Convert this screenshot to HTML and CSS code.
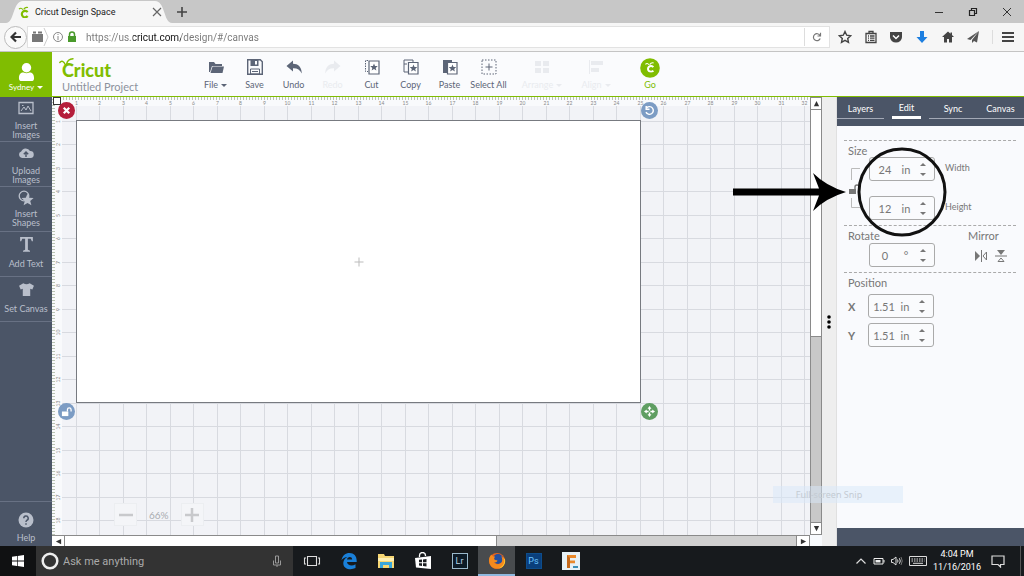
FILE: index.html
```html
<!DOCTYPE html>
<html lang="en">
<head>
<meta charset="utf-8">
<title>Cricut Design Space</title>
<link rel="stylesheet" href="styles.css">
</head>
<body>
<svg class="defs" aria-hidden="true">
  <symbol id="bug" viewBox="0 0 12 12">
    <path d="M9.6 6.2A3.2 3.2 0 1 0 9.6 10" fill="none" stroke="currentColor" stroke-width="2.2"/>
    <path d="M1 3.2Q3 1 4.8 3.6M5.6 3.4Q7.5 .6 10 1.6" fill="none" stroke="currentColor" stroke-width="1.1"/>
  </symbol>
  <symbol id="star" viewBox="0 0 10 10"><path d="M5 .5l1.3 3.2 3.4.2-2.6 2.2.9 3.4L5 7.6 2 9.5l.9-3.4L.3 3.9l3.4-.2z" fill="currentColor"/></symbol>
  <symbol id="lock-open" viewBox="0 0 12 12"><path d="M1 6h7v5H1z" fill="currentColor"/><path d="M7 6V4a2 2 0 0 1 4 0v2" fill="none" stroke="currentColor" stroke-width="1.4"/></symbol>
</svg>

<header class="tabstrip">
  <div class="tab">
    <svg class="tab-bg" viewBox="0 0 176 23" preserveAspectRatio="none"><path d="M0 23C9 23 7 1 18 1H158C169 1 167 23 176 23Z" fill="#f6f6f6"/></svg>
    <svg class="i12 green"><use href="#bug"/></svg>
    <span class="tab-title">Cricut Design Space</span>
    <button class="bare" aria-label="Close tab"><svg class="i10" viewBox="0 0 10 10"><path d="M1 1l8 8M9 1L1 9" stroke="#666" stroke-width="1.2"/></svg></button>
  </div>
  <button class="bare new-tab" aria-label="New tab"><svg class="i10" viewBox="0 0 10 10"><path d="M5 0v10M0 5h10" stroke="#444" stroke-width="1.6"/></svg></button>
  <div class="window-buttons">
    <button class="bare" aria-label="Minimize"><svg class="i10" viewBox="0 0 10 10"><path d="M1 5.5h8" stroke="#333"/></svg></button>
    <button class="bare" aria-label="Restore"><svg class="i10" viewBox="0 0 10 10"><path d="M1.5 3.5h5v5h-5zM3.5 3V1.500h5v5H7" fill="none" stroke="#222" stroke-width="1.2"/></svg></button>
    <button class="bare" aria-label="Close"><svg class="i10" viewBox="0 0 10 10"><path d="M1 1l8 8M9 1L1 9" stroke="#333"/></svg></button>
  </div>
</header>

<nav class="navbar">
  <button class="back" aria-label="Back"><svg class="i12" viewBox="0 0 12 12"><path d="M11 6H2M6 1.500L1.500 6 6 10.500" fill="none" stroke="#333" stroke-width="2.2"/></svg></button>
  <div class="address">
    <svg class="identity" viewBox="0 0 50 20">
      <path d="M1 7h11v8H1zM2 4.500h3v2H2zM7 4.500h4v2H7z" fill="#777"/>
      <path d="M13 1l4 9-4 9" fill="none" stroke="#ccc"/>
      <circle cx="27" cy="10" r="4.500" fill="none" stroke="#888"/><path d="M27 9v4M27 7v1" stroke="#888"/>
      <path d="M37 9h8v6h-8z" fill="#4a9a2c"/><path d="M38.500 9V7.500a2.500 2.500 0 0 1 5 0V9" fill="none" stroke="#4a9a2c" stroke-width="1.500"/>
    </svg>
    <input class="url" type="text" aria-label="Address" value="https://us.cricut.com/design/#/canvas">
    <button class="bare reload" aria-label="Reload"><svg class="i10" viewBox="0 0 10 10"><path d="M8 3.500A3.500 3.500 0 1 0 8.200 6.500M8.500 .8v3.200H5.500" fill="none" stroke="#777" stroke-width="1.200"/></svg></button>
  </div>
  <div class="nav-tools">
    <button class="bare" aria-label="Bookmark"><svg class="i14" viewBox="0 0 14 14"><path d="M7 1.500l1.700 3.700 4 .5-3 2.700.8 4L7 10.400l-3.500 2 .8-4-3-2.700 4-.5z" fill="none" stroke="#444" stroke-width="1.400"/></svg></button>
    <button class="bare" aria-label="Library"><svg class="i14" viewBox="0 0 14 14"><path d="M2 3.500h10v9H2zM5 3V1.500h4V3M4 6h1m1 0h4.500M4 8.200h1m1 0h4.500M4 10.400h1m1 0h4.500" fill="none" stroke="#444" stroke-width="1.300"/></svg></button>
    <button class="bare" aria-label="Pocket"><svg class="i14" viewBox="0 0 14 14"><path d="M1 2h12v5a6 5.500 0 0 1-12 0z" fill="#444"/><path d="M4 5.500l3 3 3-3" fill="none" stroke="#fff" stroke-width="1.500"/></svg></button>
    <button class="bare" aria-label="Downloads"><svg class="i14" viewBox="0 0 14 14"><path d="M5 1h4v6h3.500L7 13 1.500 7H5z" fill="#1d7fe0"/></svg></button>
    <button class="bare" aria-label="Home"><svg class="i14" viewBox="0 0 14 14"><path d="M7 1.500L1 7h2v5.500h3V9h2v3.500h3V7h2l-2-2V2.500H9.500v1.300z" fill="#444"/></svg></button>
    <button class="bare" aria-label="Share"><svg class="i14" viewBox="0 0 14 14"><path d="M13 1L1 9l3.500 1zM13 1L6 10v3l2-2 3 1.500z" fill="#555"/></svg></button>
    <button class="bare menu" aria-label="Menu"><svg class="i14" viewBox="0 0 14 14"><path d="M1 3h12M1 7h12M1 11h12" stroke="#444" stroke-width="2"/></svg></button>
  </div>
</nav>

<header class="appbar">
  <button class="user">
    <svg viewBox="0 0 18 19"><circle cx="9" cy="5" r="5"/><path d="M1 16c0-5 3-6.500 5-6 2 1 4 1 6 0 2-.5 5 1 5 6 0 2-1 3-3 3H4c-2 0-3-1-3-3z"/></svg>
    <span>Sydney<i class="caret"></i></span>
  </button>
  <div class="brand">
    <a class="logo" href="#">Cricut<svg viewBox="0 0 16 9"><path d="M.8 5.500Q3.500 2 6.500 8M7.500 7.500Q8.500 2 14 1.800" fill="none" stroke="currentColor" stroke-width="1.400" stroke-linecap="round"/></svg></a>
    <span class="project">Untitled Project</span>
  </div>
  <div class="tools">
    <button class="tool"><svg viewBox="0 0 18 18"><path d="M2 4h5l1.500 2H15v2H5L3 14H2z"/><path d="M5.500 8.500H17L15.500 15H3.500z"/></svg><span>File<i class="caret"></i></span></button>
    <button class="tool"><svg viewBox="0 0 18 18"><path d="M1.700 1.700h12.600l2 2v12.600H1.700z" fill="none" stroke="currentColor" stroke-width="1.400"/><path d="M4.500 1.500h8V8h-8zM9 3v3.500h2V3z" fill-rule="evenodd"/><path d="M4.500 11h9v5h-9z" fill="none" stroke="currentColor"/><path d="M6 13.500h6" stroke="currentColor"/></svg><span>Save</span></button>
    <button class="tool"><svg viewBox="0 0 18 18"><path d="M1.500 8L8 2.500v3.300c5 0 8.500 3 8.800 9.700C15 11.500 12 10 8 10.200v3.300z"/></svg><span>Undo</span></button>
    <button class="tool off" disabled><svg viewBox="0 0 18 18"><path d="M16.500 8L10 2.500v3.300c-5 0-8.500 3-8.800 9.700C3 11.500 6 10 10 10.200v3.300z"/></svg><span>Redo</span></button>
    <button class="tool"><svg viewBox="0 0 18 18"><path d="M5 2.500H2.500v11H5" fill="none" stroke="currentColor" stroke-dasharray="1.500 1"/><path d="M6 3h10v13H6z" fill="#fff" stroke="currentColor" stroke-width="1.200"/><use href="#star" x="7" y="5" width="8" height="8"/></svg><span>Cut</span></button>
    <button class="tool"><svg viewBox="0 0 18 18"><path d="M2 2h9v12H2zM2 6h3" fill="none" stroke="currentColor"/><path d="M6.500 4.500h9.500V16H6.500z" fill="#fff" stroke="currentColor" stroke-width="1.200"/><use href="#star" x="7.500" y="6" width="8" height="8"/></svg><span>Copy</span></button>
    <button class="tool"><svg viewBox="0 0 18 18"><path d="M2 2h9v13H2z"/><path d="M6.500 4.500h9.500V16H6.500z" fill="#fff" stroke="currentColor" stroke-width="1.200"/><use href="#star" x="7.500" y="6" width="8" height="8"/></svg><span>Paste</span></button>
    <button class="tool"><svg viewBox="0 0 18 18"><path d="M2 2h14v14H2z" fill="none" stroke="currentColor" stroke-dasharray="1.500 1.500"/><path d="M9 5.500v7M5.500 9h7" stroke="currentColor"/></svg><span>Select All</span></button>
    <div class="tool-group">
      <button class="tool off" disabled><svg viewBox="0 0 18 18"><path d="M2 3h6v5H2zM10 3h6v5h-6zM2 10h6v5H2zM10 10h6v5h-6z"/></svg><span>Arrange<i class="caret"></i></span></button>
      <button class="tool off" disabled><svg viewBox="0 0 18 18"><path d="M2 2h1v14H2zM4 3h12v4H4zM4 10h8v4H4z"/></svg><span>Align<i class="caret"></i></span></button>
      <button class="tool go"><svg viewBox="0 0 20 20"><circle cx="10" cy="10" r="9.800" fill="#80bd01"/><use href="#bug" x="4.500" y="3.500" width="11" height="11" color="#fff"/></svg><span>Go</span></button>
    </div>
  </div>
</header>

<main class="workspace">
  <nav class="rail">
    <button><svg viewBox="0 0 16 14"><path d="M1 1.500h14v11H1z" fill="none" stroke="currentColor" stroke-width="1.300"/><path d="M3 10l3-4 2 3 2-4 3 5M4 4.500h1.500" fill="none" stroke="currentColor"/></svg><span>Insert<br>Images</span></button>
    <button><svg viewBox="0 0 16 14"><path d="M4 12a3.300 3.300 0 0 1-.8-6.400A4.800 4.800 0 0 1 12 5a3.500 3.500 0 0 1 .5 7z" fill="currentColor"/><path d="M8 11V6.500M5.800 8.300L8 6l2.200 2.300" fill="none" stroke="#4b5567" stroke-width="1.400"/></svg><span>Upload<br>Images</span></button>
    <button class="shapes"><svg viewBox="0 0 16 16"><circle cx="6" cy="6" r="4.800" fill="none" stroke="currentColor" stroke-width="1.300"/><use href="#star" x="3" y="3" width="13" height="13"/></svg><span>Insert<br>Shapes</span></button>
    <button class="roomy"><svg viewBox="0 0 16 16"><path d="M2 1h12v4h-1l-1-2.300H9.300V13l2 .8v1H4.700v-1l2-.8V2.700H4L3 5H2z" fill="currentColor"/></svg><span>Add Text</span></button>
    <button class="roomy"><svg viewBox="0 0 16 14"><path d="M5 1q3 2 6 0l4 2.500-1.500 3.500-2-.7V13h-7V6.300l-2 .7L1 3.500z" fill="currentColor"/></svg><span>Set Canvas</span></button>
    <button class="help"><svg viewBox="0 0 16 16"><circle cx="8" cy="8" r="7.500" fill="currentColor"/><path d="M5.800 6.300a2.200 2.200 0 1 1 3 2Q8 8.700 8 10M8 11.200v1.500" fill="none" stroke="#4b5567" stroke-width="1.500"/></svg><span>Help</span></button>
  </nav>

  <section class="stage">
    <div class="board">
      <svg class="grid" id="grid" aria-hidden="true"></svg>
      <div class="mat">
        <svg class="cross" viewBox="0 0 10 10"><path d="M5 .5v9M.5 5h9" stroke="#bbb"/></svg>
        <button class="handle delete" aria-label="Delete"><svg viewBox="0 0 10 10"><path d="M2.500 2.500l5 5M7.500 2.500l-5 5" stroke="#fff" stroke-width="2"/></svg></button>
        <button class="handle rotate" aria-label="Rotate"><svg viewBox="0 0 10 10"><path d="M2.500 2.500A3.500 3.500 0 1 1 1.800 6.500M2 .8v3h3" fill="none" stroke="#fff" stroke-width="1.300"/></svg></button>
        <button class="handle unlock" aria-label="Unlock proportions"><svg><use href="#lock-open"/></svg></button>
        <button class="handle scale" aria-label="Resize"><svg viewBox="0 0 10 10"><path d="M5 0l1.800 2.500H5.600v1.700H4.400V2.500H3.200zM5 10l1.800-2.500H5.600V5.800H4.400v1.700H3.200zM0 5l2.500-1.800v1.200h1.700v1.200H2.500v1.200zM10 5L7.500 3.200v1.200H5.800v1.200h1.700v1.200z" fill="#fff"/></svg></button>
      </div>
      <div class="zoom">
        <button aria-label="Zoom out"><svg viewBox="0 0 14 14"><path d="M0 7h14" stroke="#c8c9cc" stroke-width="2.500"/></svg></button>
        <span>66%</span>
        <button aria-label="Zoom in"><svg viewBox="0 0 14 14"><path d="M0 7h14M7 0v14" stroke="#c8c9cc" stroke-width="2.500"/></svg></button>
      </div>
    </div>
    <div class="vbar">
      <button aria-label="Scroll up"><svg viewBox="0 0 8 8"><path d="M4 1l3 6H1z"/></svg></button>
      <div class="vtrack"></div><div class="vthumb"></div>
      <button aria-label="Scroll down"><svg viewBox="0 0 8 8"><path d="M4 7l3-6H1z"/></svg></button>
    </div>
    <div class="hbar">
      <button aria-label="Scroll left"><svg viewBox="0 0 8 8"><path d="M1 4l6-3v6z"/></svg></button>
      <div class="htrack"></div><div class="hthumb"></div>
      <button aria-label="Scroll right"><svg viewBox="0 0 8 8"><path d="M7 4L1 1v6z"/></svg></button>
    </div>
  </section>

  <div class="splitter"><svg viewBox="0 0 4 14"><circle cx="2" cy="2" r="1.800"/><circle cx="2" cy="7" r="1.800"/><circle cx="2" cy="12" r="1.800"/></svg></div>

  <aside class="panel">
    <div class="tabs">
      <button>Layers</button><button class="active">Edit</button><button>Sync</button><button>Canvas</button>
    </div>
    <div class="props">
      <section class="size">
        <div class="size-side">
          <h2>Size</h2>
          <svg class="bracket" viewBox="0 0 12 42"><path d="M12 1.500H3.500V13M3.500 31v9.500H12" fill="none" stroke="#bbb"/><use href="#lock-open" x="0" y="16" width="12" height="12" color="#777"/></svg>
        </div>
        <div class="size-fields">
          <div class="row"><div class="field"><input id="w" value="24"><span>in</span><div class="spin"><button aria-label="Increase width"></button><button class="down" aria-label="Decrease width"></button></div></div><label for="w">Width</label></div>
          <div class="row"><div class="field"><input id="h" value="12"><span>in</span><div class="spin"><button aria-label="Increase height"></button><button class="down" aria-label="Decrease height"></button></div></div><label for="h">Height</label></div>
        </div>
      </section>
      <section class="turn">
        <div>
          <h2><label for="r">Rotate</label></h2>
          <div class="field indent"><input id="r" value="0"><span>°</span><div class="spin"><button aria-label="Increase angle"></button><button class="down" aria-label="Decrease angle"></button></div></div>
        </div>
        <div class="mirror">
          <h2>Mirror</h2>
          <div class="mirror-buttons">
            <button class="bare" aria-label="Mirror horizontally"><svg class="i12" viewBox="0 0 12 12"><path d="M0 1l5 5-5 5z" fill="#777"/><path d="M6.500 0v12M11.500 2L8 6l3.500 4z" fill="none" stroke="#777"/></svg></button>
            <button class="bare" aria-label="Mirror vertically"><svg class="i12" viewBox="0 0 12 12"><path d="M2 0h8L6 5z" fill="#777"/><path d="M0 6h12M3 11.500h6L6 8z" fill="none" stroke="#777"/></svg></button>
          </div>
        </div>
      </section>
      <section class="position">
        <h2>Position</h2>
        <div class="row"><label class="axis" for="px">X</label><div class="field"><input id="px" value="1.51"><span>in</span><div class="spin"><button aria-label="Increase X"></button><button class="down" aria-label="Decrease X"></button></div></div></div>
        <div class="row"><label class="axis" for="py">Y</label><div class="field"><input id="py" value="1.51"><span>in</span><div class="spin"><button aria-label="Increase Y"></button><button class="down" aria-label="Decrease Y"></button></div></div></div>
      </section>
    </div>
    <svg class="callout" viewBox="0 0 214 90" aria-hidden="true">
      <path d="M0 41.500h86L80 26Q93 39 113 45Q93 51 80 64l6-15.500H0z"/>
      <circle cx="169" cy="45" r="43" fill="none" stroke="#111" stroke-width="3"/>
    </svg>
    <div class="snip">Full-screen Snip</div>
  </aside>
</main>

<footer class="taskbar">
  <button class="start" aria-label="Start"><svg class="i12" viewBox="0 0 12 12"><path d="M0 1.700L5 1v4.600H0zM5.700.9L12 0v5.600H5.700zM0 6.400h5V11l-5-.7zM5.700 6.400H12V12l-6.300-.9z" fill="#fff"/></svg></button>
  <div class="search">
    <svg class="i16" viewBox="0 0 16 16"><circle cx="8" cy="8" r="6.500" fill="none" stroke="#eee" stroke-width="2.200"/></svg>
    <input type="text" aria-label="Search" placeholder="Ask me anything">
    <svg class="i12" viewBox="0 0 12 12"><path d="M4.500 1h3v7h-3zM2.500 5.500V10h7V5.500M6 10v2" fill="none" stroke="#999"/></svg>
  </div>
  <div class="apps">
    <button aria-label="Task view"><svg viewBox="0 0 18 18"><path d="M4.500 4.500h9v9h-9zM3 6H1.500v6H3M15 6h1.500v6H15" fill="none" stroke="#ddd" stroke-width="1.100"/></svg></button>
    <button aria-label="Edge"><svg viewBox="0 0 18 18"><path d="M1.500 8.200C2.500 3.500 5.500 1 9.500 1c4.500 0 7.500 3 7.200 9H7c.3 3.500 5 4.500 8.500 2.300V16c-5 2.500-12.500 1-12.200-5.200C3.500 8 5 6.200 7.500 5 5 5.200 2.500 6.300 1.500 8.200zM7 7.500h5.200c0-3.400-4.800-3.200-5.200 0z" fill="#1a80d9"/></svg></button>
    <button aria-label="File Explorer"><svg viewBox="0 0 18 18"><path d="M1 2h6l1 2h9v12H1z" fill="#f7d774"/><path d="M1 6h16v3H1z" fill="#fff0b3"/><path d="M3 10h12v6h-3v-3H6v3H3z" fill="#3aa7dc"/></svg></button>
    <button aria-label="Store"><svg viewBox="0 0 18 18"><path d="M1 6l16-2v13L2 15.500z" fill="#fff"/><path d="M5.500 5V3.500a2.500 2.500 0 0 1 6 0V4" fill="none" stroke="#fff" stroke-width="1.300"/><path d="M5 7.800l3-.3v2.700H5zM9 7.400l3.500-.4v3.200H9zM5 11.200h3v2.700l-3-.3zM9 11.200h3.500v3.200L9 14z" fill="#1a1d20"/></svg></button>
    <button><span class="badge lr">Lr</span></button>
    <button class="current" aria-label="Firefox"><svg viewBox="0 0 18 18"><circle cx="9" cy="9" r="8" fill="#e8641b"/><circle cx="10" cy="7" r="5" fill="#24509f"/><path d="M1 8C1 5 3 3 3.500 2.500 4 4 5 4.500 7 4.500L6 7c1 1.500 3 1 3.500 1.500-.5 2-2.500 2-3.500 2 2 3 7 2 8-1 .5-2 0-4-1-5.500C17 6.500 18 11 14.500 14.500 8 19.500 1 15 1 8z" fill="#f58a1d"/><path d="M15 5c3 5 0 10-5 11.500 5 0 8-5 7-9z" fill="#fdc830"/></svg></button>
    <button><span class="badge ps">Ps</span></button>
    <button aria-label="Fusion"><svg viewBox="0 0 18 18"><path d="M0 0h18v18H0z" fill="#e6f1f6"/><path d="M5 3h9v3H8v2.500h5v2.700H8V16H5z" fill="#e9892b"/><path d="M5 3l3 3v10H5z" fill="#c46a1c"/><path d="M11 14h5v2h-5z" fill="#3a8fb7"/></svg></button>
  </div>
  <div class="tray">
    <svg class="i12" viewBox="0 0 12 12"><path d="M1.500 8.500L6 4l4.500 4.500" fill="none" stroke="#ddd" stroke-width="1.200"/></svg>
    <svg class="i12" viewBox="0 0 12 12"><path d="M1 3.500h9v5.500H1z" fill="none" stroke="#eee"/><path d="M2.500 5h5v2.500h-5zM10.500 5h1v2.500h-1z" fill="#eee"/></svg>
    <svg class="i12" viewBox="0 0 12 12"><path d="M.5 4.500H2L5 2v8L2 7.500H.5zM6.500 4.500q1 1.500 0 3M8.300 3.200q2 2.800 0 5.600" fill="none" stroke="#ddd"/><path d="M10 2q2.500 4 0 8" fill="none" stroke="#777"/></svg>
    <svg class="keys" viewBox="0 0 18 12"><path d="M.5 1.500h17v9H.5z" fill="none" stroke="#ddd"/><path d="M2.500 4h13M2.500 6h13" stroke="#ddd" stroke-dasharray="1.500 1"/><path d="M4 8.300h10" stroke="#ddd"/></svg>
    <div class="clock"><span>4:04 PM</span><span>11/16/2016</span></div>
    <svg class="i14" viewBox="0 0 14 14"><path d="M1 2h12v8.500H9.500V13L7 10.500H1z" fill="none" stroke="#ddd" stroke-width="1.200"/></svg>
  </div>
  <button class="show-desktop" aria-label="Show desktop"></button>
</footer>
<script src="grid.js"></script>
</body>
</html>
```

FILE: styles.css
```css
* { box-sizing: border-box; }
body {
  margin: 0;
  min-height: 100vh;
  display: flex;
  flex-direction: column;
  font-family: Lato, "Liberation Sans", sans-serif;
  background: #f8fafd;
  overflow: hidden;
}
button { font: inherit; color: inherit; border: 0; padding: 0; background: none; }
input { font: inherit; color: inherit; border: 0; padding: 0; background: none; min-width: 0; outline: 0; }
h2 { margin: 0; font-size: 11px; line-height: 12px; font-weight: 400; color: #777; }
svg { display: block; flex: none; }
.defs { width: 0; height: 0; position: absolute; }
.i10 { width: 10px; height: 10px; }
.i12 { width: 12px; height: 12px; }
.i14 { width: 14px; height: 14px; }
.i16 { width: 18px; height: 18px; }
.green { color: #80bd01; }
.caret {
  display: inline-block;
  margin-left: 3px;
  vertical-align: middle;
  border: 3px solid transparent;
  border-top-color: currentColor;
  border-bottom: 0;
}

/* Browser chrome */
.tabstrip { display: flex; align-items: center; height: 23px; background: #c7c7c7; font-family: Roboto, "Noto Sans", sans-serif; }
.tab { position: relative; display: flex; align-items: center; gap: 5px; width: 166px; margin-left: 6px; padding: 0 10px 0 12px; height: 23px; }
.tab > * { position: relative; }
.tab .tab-bg { position: absolute; inset: 0; width: 100%; height: 100%; }
.tab-title { flex: 1; font-size: 9px; color: #222; white-space: nowrap; }
.new-tab { margin-left: 5px; }
.window-buttons { display: flex; gap: 24px; margin-left: auto; padding-right: 12px; }
.navbar { display: flex; align-items: center; height: 29px; background: #f6f6f6; border-bottom: 1px solid #c4c4c4; }
.back { display: grid; place-items: center; width: 23px; height: 23px; margin-left: 4px; border: 1px solid #bbb; border-radius: 50%; background: #fafafa; }
.address { flex: 1; display: flex; align-items: center; height: 22px; background: #fff; border: 1px solid #e2e2e2; }
.identity { width: 50px; height: 20px; margin-left: 3px; }
.url {
  flex: 1;
  margin-left: 5px;
  font-family: Roboto, "Noto Sans", sans-serif;
  font-size: 10px;
  background: linear-gradient(90deg, #777 47px, #111 47px, #111 95px, #777 95px);
  background-clip: text;
  -webkit-background-clip: text;
  color: transparent;
}
.reload { padding: 4px 7px; border-left: 1px solid #ddd; }
.nav-tools { display: flex; justify-content: space-between; align-items: center; width: 194px; padding: 0 9px 0 8px; }
.menu { padding-left: 8px; border-left: 1px solid #ddd; }

/* Application header */
.appbar { display: flex; height: 45px; border-bottom: 1px solid #80bd01; background: #fafbfd; }
.user { width: 52px; display: flex; flex-direction: column; align-items: center; justify-content: flex-end; gap: 1px; padding-bottom: 3px; background: #80bd01; color: #fff; font-size: 8px; line-height: 11px; }
.user svg { width: 17px; height: 18px; fill: #fff; }
.brand { display: flex; flex-direction: column; justify-content: flex-end; width: 144px; padding: 0 0 2px 10px; }
.logo { position: relative; color: #80bd01; font-size: 18px; line-height: 19px; font-weight: 900; text-decoration: none; }
.logo svg { position: absolute; left: -3px; top: -4px; width: 16px; height: 9px; }
.project { font-size: 11px; line-height: 14px; color: #8c919c; }
.tools { display: flex; align-items: stretch; }
.tool { width: 39px; display: flex; flex-direction: column; align-items: center; justify-content: center; gap: 3px; font-size: 9px; line-height: 11px; color: #5c6577; white-space: nowrap; }
.tool svg { width: 18px; height: 18px; fill: currentColor; }
.tool-group { display: flex; margin-left: 7px; }
.tool-group .tool { width: 54px; }
.tool.off { color: #e9ebef; }
.tool.go { color: #80bd01; gap: 1px; }
.go svg { width: 20px; height: 20px; }

/* Workspace */
.workspace { flex: 1; display: flex; }
.rail { width: 52px; display: flex; flex-direction: column; background: #4b5567; color: #b9bfcb; }
.rail button { height: 45px; display: flex; flex-direction: column; align-items: center; justify-content: center; gap: 6px; padding-top: 2px; border-bottom: 1px solid #687184; font-size: 9px; line-height: 9px; white-space: nowrap; }
.rail svg { width: 16px; height: 14px; }
.rail .shapes { gap: 3px; padding: 0 0 2px; }
.rail .shapes svg { height: 16px; }
.rail .roomy { gap: 6px; padding: 0 0 5px; }
.rail .roomy svg { width: 17px; height: 17px; }
.rail .help { margin-top: auto; border-top: 1px solid #687184; border-bottom: 0; gap: 5px; padding-top: 5px; }
.rail .help svg { height: 16px; }
.stage { flex: 1; min-width: 0; display: grid; grid-template: 1fr 11px / 1fr 12px; }
.board { position: relative; overflow: hidden; background: #f2f3f7; }
.grid { position: absolute; inset: 0; width: 100%; height: 100%; }
.grid line { stroke: #d8dae0; }
.grid .ruler { fill: #f9fafc; }
.grid .tick { stroke: #b9c3b3; }
.grid text { font-size: 5px; fill: #888; text-anchor: middle; }
.mat { position: absolute; left: 24px; top: 23px; width: 565px; height: 283px; background: #fff; border: 1px solid #777a80; display: grid; place-items: center; }
.cross { width: 10px; height: 10px; }
.handle { position: absolute; display: grid; place-items: center; width: 17px; height: 17px; border-radius: 50%; background: #7c9cc4; color: #fff; }
.handle svg { width: 11px; height: 11px; }
.delete { left: -19px; top: -19px; background: #b51e3b; }
.rotate { right: -18px; top: -19px; }
.unlock { left: -19px; bottom: -18px; }
.scale { right: -18px; bottom: -18px; background: #5f9e62; }
.zoom { position: absolute; left: 62px; bottom: 9px; display: flex; align-items: center; gap: 12px; font-size: 10px; color: #a9abb0; }
.zoom button { display: grid; place-items: center; width: 23px; height: 23px; border: 1px solid #eceef1; background: #f4f5f8; }
.zoom svg { width: 14px; height: 14px; }
.vbar { display: flex; flex-direction: column; border: solid #8a8a8a; border-width: 0 1px; background: #fff; }
.vbar button, .hbar button { display: grid; place-items: center; background: #fff; }
.vbar svg, .hbar svg { width: 7px; height: 7px; fill: #333; }
.vbar button { height: 13px; border: solid #8a8a8a; border-width: 1px 0; }
.vtrack { flex: 226; background: #fff; }
.vthumb { flex: 185; background: #c8c8c8; border-top: 1px solid #8a8a8a; }
.hbar { display: flex; border-top: 1px solid #8a8a8a; background: #fff; }
.hbar button { width: 13px; border-right: 1px solid #8a8a8a; }
.htrack { flex: 433; }
.hthumb { flex: 300; background: #d0d0d0; border: solid #8a8a8a; border-width: 0 1px; }
.splitter { width: 15px; display: grid; place-items: center; background: #eee; border-right: 1px solid #e0e0e0; }
.splitter svg { width: 4px; height: 14px; }

/* Properties panel */
.panel { position: relative; width: 187px; display: flex; flex-direction: column; background: #f9fafd; border-bottom: 18px solid #4b5567; color: #777; }
.tabs { display: grid; grid-template-columns: 47px 1fr 48px 47px; height: 29px; background: #4b5567; color: #fff; font-size: 9px; }
.tabs button { height: 22px; padding-top: 1px; border-bottom: 1px solid #a3a9b6; }
.tabs .active { margin: 0 8px; border-bottom: 3px solid #fff; }
.props { padding: 14px 8px 0 7px; }
.props section { padding-left: 4px; border-top: 1px dashed #aaa; }
.size { display: flex; height: 85px; }
.size-side { width: 21px; padding-top: 4px; }
.bracket { width: 12px; height: 42px; margin-top: 10px; }
.size-fields { display: flex; flex-direction: column; gap: 15px; padding-top: 16px; }
.row { display: flex; gap: 10px; font-size: 9px; }
.row > label { padding-top: 5px; }
.field { display: flex; align-items: center; width: 66px; height: 24px; padding: 0 8px 0 2px; border: 1px solid #aaa; border-radius: 3px; background: #fafbfd; font-size: 11px; }
.field input { width: 26px; text-align: center; }
.field span { width: 16px; text-align: center; }
.spin { display: flex; flex-direction: column; gap: 7px; margin-left: auto; }
.spin button { border: 3px solid transparent; border-bottom: 3px solid #777; border-top: 0; }
.spin .down { border: 3px solid transparent; border-top: 3px solid #777; border-bottom: 0; }
.turn { display: flex; justify-content: space-between; height: 47px; padding-top: 4px; padding-right: 9px; }
.indent { margin: 1px 0 0 21px; }
.mirror { width: 39px; }
.mirror-buttons { display: flex; justify-content: space-between; padding: 8px 0 0 7px; }
.mirror, .turn h2, .position h2 { white-space: nowrap; }
.position { display: flex; flex-direction: column; gap: 5px; padding-top: 4px; }
.position .row { align-items: center; gap: 0; }
.row > .axis { width: 20px; padding: 0; font-size: 11px; font-weight: 700; }
.callout { position: absolute; left: -104px; top: 50px; width: 214px; height: 90px; }
.snip { position: absolute; left: -64px; bottom: 25px; width: 130px; padding-right: 18px; font: 9px/17px "Noto Sans", sans-serif; text-align: center; color: #c4cbd3; background: rgba(215, 232, 250, .5); }

/* Taskbar */
.taskbar { display: flex; align-items: stretch; height: 30px; background: #171a1d; color: #fff; font-family: Roboto, "Noto Sans", sans-serif; }
.start { width: 36px; display: grid; place-items: center; background: #101112; }
.search { width: 257px; display: flex; align-items: center; gap: 4px; padding: 0 10px 0 5px; background: #333; }
.search input { flex: 1; font-size: 11px; }
.search input::placeholder { color: #aaa; }
.apps { display: flex; }
.apps button { width: 37px; display: grid; place-items: center; border: solid transparent; border-width: 2px 0; }
.apps svg { width: 18px; height: 18px; }
.apps .current { background: #484b4e; border-bottom-color: #8fb9e0; }
.badge { width: 16px; font-size: 9px; line-height: 14px; border: 1px solid #9bb9cc; color: #b7d5e8; background: #0d1b27; }
.ps { border-color: #0d4d8c; background: #0a3f7c; color: #6cc4ff; }
.tray { display: flex; align-items: center; gap: 6px; margin-left: auto; padding-right: 15px; }
.keys { width: 18px; height: 12px; }
.clock { display: flex; flex-direction: column; align-items: center; width: 48px; margin-right: 4px; font-size: 9px; line-height: 13px; white-space: nowrap; }
.show-desktop { width: 4px; border-left: 1px solid #555; }
```

FILE: grid.js
```js
// Draws the rulers and the inch grid of the design board.
const NS = 'http://www.w3.org/2000/svg';
const grid = document.getElementById('grid');
const ORIGIN = 24, INCH = 23.5;
function add(name, attrs, text) {
  const el = document.createElementNS(NS, name);
  for (const key in attrs) el.setAttribute(key, attrs[key]);
  if (text) el.textContent = text;
  grid.appendChild(el);
}
function line(x1, y1, x2, y2, cls) {
  add('line', { x1, y1, x2, y2, class: cls || '' });
}
add('rect', { x: 0, y: 0, width: '100%', height: 9, class: 'ruler' });
add('rect', { x: 0, y: 0, width: 10, height: '100%', class: 'ruler' });
const { width, height } = grid.getBoundingClientRect();
for (let n = 1, p = ORIGIN; p < Math.max(width, height); n++, p = ORIGIN + INCH * (n - 1)) {
  const at = Math.floor(p) + 0.5;
  if (p < width) {
    line(at, 9, at, '100%');
    add('text', { x: at, y: 8 }, String(n));
  }
  if (p < height) {
    line(10, at, '100%', at);
    add('text', { transform: `translate(8 ${at}) rotate(-90)` }, String(n));
  }
}
for (let p = 2.5; p < width; p += 3) line(p, 0, p, 3, 'tick');
for (let p = 2.5; p < height; p += 3) line(0, p, 3, p, 'tick');
add('rect', { x: 1.5, y: 0.5, width: 7, height: 7, fill: '#fff', stroke: '#333' });
```
